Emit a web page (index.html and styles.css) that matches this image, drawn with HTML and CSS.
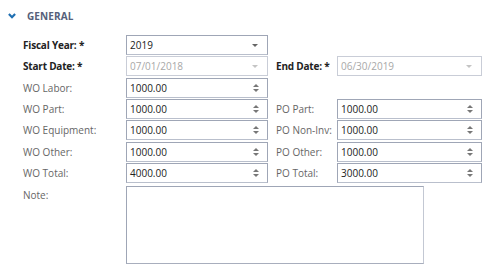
FILE: index.html
```html
<!DOCTYPE html>
<html lang="en">
<head>
    <meta charset="UTF-8">
    <title>General</title>
    <link rel="stylesheet" href="styles.css">
</head>
<body>
    <div class="section-head">
        <svg class="chevron" width="8" height="6" viewBox="0 0 8 6"><path d="M0.9 1 L4 4.2 L7.1 1" fill="none" stroke="#1f6fb2" stroke-width="2.2"/></svg>
        <span>GENERAL</span>
    </div>

    <div class="form">
        <!-- Fiscal year -->
        <label class="req">Fiscal Year: *</label>
        <div class="box"><span>2019</span><i class="arrow"></i></div>
        <div></div><div></div>

        <!-- Dates -->
        <label class="req">Start Date: *</label>
        <div class="box off"><span>07/01/2018</span><i class="arrow"></i></div>
        <label class="req right">End Date: *</label>
        <div class="box off"><span>06/30/2019</span><i class="arrow"></i></div>

        <label>WO Labor:</label>
        <div class="box"><span>1000.00</span><i class="spin"></i></div>
        <div></div><div></div>

        <label>WO Part:</label>
        <div class="box"><span>1000.00</span><i class="spin"></i></div>
        <label class="right">PO Part:</label>
        <div class="box"><span>1000.00</span><i class="spin"></i></div>

        <label>WO Equipment:</label>
        <div class="box"><span>1000.00</span><i class="spin"></i></div>
        <label class="right">PO Non-Inv:</label>
        <div class="box"><span>1000.00</span><i class="spin"></i></div>

        <label>WO Other:</label>
        <div class="box"><span>1000.00</span><i class="spin"></i></div>
        <label class="right">PO Other:</label>
        <div class="box"><span>1000.00</span><i class="spin"></i></div>

        <label>WO Total:</label>
        <div class="box"><span>4000.00</span><i class="spin"></i></div>
        <label class="right">PO Total:</label>
        <div class="box"><span>3000.00</span><i class="spin"></i></div>

        <label class="top">Note:</label>
        <div class="note"></div>
    </div>
</body>
</html>
```

FILE: styles.css
```css
body {
    margin: 0;
    background-color: white;
    font-family: "Open Sans", "Noto Sans", sans-serif;
    font-size: 10px;
    color: #333;
}
.section-head {
    display: flex;
    align-items: center;
    height: 16px;
    padding: 8px 0 0 8px;
    color: #56607a;
    font-weight: bold;
    font-size: 10px;
    letter-spacing: 0.1px;
}
.chevron {
    margin-right: 11px;
}
.form {
    display: grid;
    grid-template-columns: 103px 142px 69px 145px;
    grid-template-rows: repeat(7, 20px) 80px;
    row-gap: 1.33px;
    margin: 11px 0 0 23px;
}
label {
    display: flex;
    align-items: center;
    color: #666;
    white-space: nowrap;
}
label.req {
    color: #222;
    font-weight: bold;
    letter-spacing: -0.2px;
}
label.right {
    padding-left: 8px;
}
label.top {
    align-items: flex-start;
    padding-top: 4px;
}
.box {
    display: flex;
    align-items: center;
    justify-content: space-between;
    padding: 0 8px 0 3px;
    border: 1px solid #9fa6b6;
    border-bottom-color: #b9bfcc;
    color: #222;
}
.box.off {
    border-color: #c9cdd7;
    color: #a8a8a8;
}
.arrow {
    width: 0;
    height: 0;
    border-left: 3px solid transparent;
    border-right: 3px solid transparent;
    border-top: 3px solid #666;
    margin-right: 1px;
}
.box.off .arrow {
    border-top-color: #c4c4c4;
}
.spin {
    position: relative;
    width: 6px;
    height: 8px;
}
.spin::before,
.spin::after {
    content: "";
    position: absolute;
    left: 0;
    border-left: 3px solid transparent;
    border-right: 3px solid transparent;
}
.spin::before {
    top: 0;
    border-bottom: 3px solid #777;
}
.spin::after {
    bottom: 0;
    border-top: 3px solid #777;
}
.note {
    grid-column: 2 / 5;
    width: 296px;
    height: 76px;
    margin-top: 2px;
    border: 1px solid #9fa6b6;
    border-right-color: #c3c8d3;
    border-bottom-color: #a8aebd;
}
```
